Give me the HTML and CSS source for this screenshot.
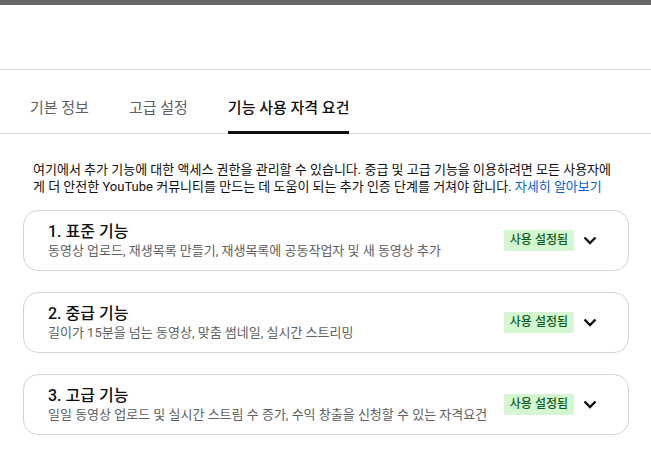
FILE: index.html
```html
<!DOCTYPE html>
<html lang="ko">
<head>
<meta charset="utf-8">
<link rel="stylesheet" href="styles.css">
</head>
<body>
<div class="topbar"></div>
<div class="header"></div>
<nav class="tabs">
  <div class="tab">기본 정보</div>
  <div class="tab">고급 설정</div>
  <div class="tab active">기능 사용 자격 요건</div>
</nav>
<main class="content">
  <p class="intro">여기에서 추가 기능에 대한 액세스 권한을 관리할 수 있습니다. 중급 및 고급 기능을 이용하려면 모든 사용자에게 더 안전한 YouTube 커뮤니티를 만드는 데 도움이 되는 추가 인증 단계를 거쳐야 합니다. <a class="link" href="#">자세히 알아보기</a></p>
  <div class="cards">
    <div class="card">
      <div class="card-text">
        <div class="card-title">1. 표준 기능</div>
        <div class="card-sub">동영상 업로드, 재생목록 만들기, 재생목록에 공동작업자 및 새 동영상 추가</div>
      </div>
      <span class="badge">사용 설정됨</span>
      <svg class="chev" width="14" height="9" viewBox="0 0 14 9"><path d="M1.5 1.5 L7 7 L12.5 1.5" fill="none" stroke="#0f0f0f" stroke-width="2.4"/></svg>
    </div>
    <div class="card">
      <div class="card-text">
        <div class="card-title">2. 중급 기능</div>
        <div class="card-sub">길이가 15분을 넘는 동영상, 맞춤 썸네일, 실시간 스트리밍</div>
      </div>
      <span class="badge">사용 설정됨</span>
      <svg class="chev" width="14" height="9" viewBox="0 0 14 9"><path d="M1.5 1.5 L7 7 L12.5 1.5" fill="none" stroke="#0f0f0f" stroke-width="2.4"/></svg>
    </div>
    <div class="card">
      <div class="card-text">
        <div class="card-title">3. 고급 기능</div>
        <div class="card-sub">일일 동영상 업로드 및 실시간 스트림 수 증가, 수익 창출을 신청할 수 있는 자격요건</div>
      </div>
      <span class="badge">사용 설정됨</span>
      <svg class="chev" width="14" height="9" viewBox="0 0 14 9"><path d="M1.5 1.5 L7 7 L12.5 1.5" fill="none" stroke="#0f0f0f" stroke-width="2.4"/></svg>
    </div>
  </div>
</main>
</body>
</html>
```

FILE: styles.css
```css
* { box-sizing: border-box; }
html, body {
  margin: 0;
  background: #fff;
  font-family: Roboto, "Noto Sans CJK KR", "Noto Sans", sans-serif;
  color: #0f0f0f;
}
.topbar {
  height: 5px;
  background: #666666;
}
.header {
  height: 65px;
  border-bottom: 1px solid #e0e0e0;
}
.tabs {
  display: flex;
  gap: 40px;
  padding-left: 30px;
  height: 64px;
  border-bottom: 1px solid #e0e0e0;
}
.tab {
  display: flex;
  align-items: center;
  padding-top: 12px;
  font-size: 15px;
  color: #606060;
  border-bottom: 3px solid transparent;
  margin-bottom: -1px;
}
.tab.active {
  color: #0f0f0f;
  font-weight: 500;
  border-bottom-color: #0f0f0f;
}
.content {
  padding: 0 22px 0 23px;
}
.intro {
  margin: 27px 14px 15px 10px;
  font-size: 13px;
  line-height: 17px;
  color: #0f0f0f;
  word-break: break-all;
}
.link {
  color: #065fd4;
  text-decoration: none;
}
.cards {
  display: flex;
  flex-direction: column;
  gap: 21px;
}
.card {
  display: flex;
  align-items: center;
  height: 61px;
  border: 1px solid #d3d3d3;
  border-radius: 15px;
  padding: 0 31px 0 24px;
}
.card-text {
  flex: 1;
}
.card-title {
  font-size: 16px;
  font-weight: 500;
  line-height: 21px;
}
.card-sub {
  font-size: 13px;
  line-height: 18px;
  color: #606060;
}
.badge {
  background: #d4f7d2;
  color: #0d5c1c;
  font-size: 12px;
  font-weight: 500;
  line-height: 21px;
  padding: 0 6px;
  border-radius: 2px;
  margin-right: 9px;
}
.chev {
  display: block;
}
```
